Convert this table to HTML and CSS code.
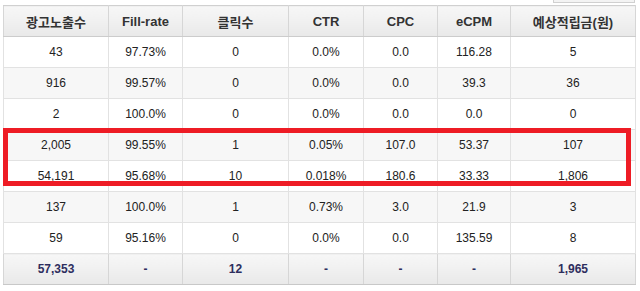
FILE: index.html
```html
<!DOCTYPE html>
<html lang="ko">
<head>
<meta charset="utf-8">
<link rel="stylesheet" href="styles.css">
</head>
<body>
<div class="page">
  <div class="topbar"><div class="topbox"></div></div>
  <div class="table-wrap">
    <table class="stats">
      <colgroup>
        <col style="width:105px"><col style="width:74px"><col style="width:106px"><col style="width:75px"><col style="width:74px"><col style="width:73px"><col>
      </colgroup>
      <thead>
        <tr><th>광고노출수</th><th>Fill-rate</th><th>클릭수</th><th>CTR</th><th>CPC</th><th>eCPM</th><th>예상적립금(원)</th></tr>
      </thead>
      <tbody>
        <tr><td>43</td><td>97.73%</td><td>0</td><td>0.0%</td><td>0.0</td><td>116.28</td><td>5</td></tr>
        <tr class="alt"><td>916</td><td>99.57%</td><td>0</td><td>0.0%</td><td>0.0</td><td>39.3</td><td>36</td></tr>
        <tr><td>2</td><td>100.0%</td><td>0</td><td>0.0%</td><td>0.0</td><td>0.0</td><td>0</td></tr>
        <tr class="alt"><td>2,005</td><td>99.55%</td><td>1</td><td>0.05%</td><td>107.0</td><td>53.37</td><td>107</td></tr>
        <tr><td>54,191</td><td>95.68%</td><td>10</td><td>0.018%</td><td>180.6</td><td>33.33</td><td>1,806</td></tr>
        <tr class="alt"><td>137</td><td>100.0%</td><td>1</td><td>0.73%</td><td>3.0</td><td>21.9</td><td>3</td></tr>
        <tr><td>59</td><td>95.16%</td><td>0</td><td>0.0%</td><td>0.0</td><td>135.59</td><td>8</td></tr>
      </tbody>
      <tfoot>
        <tr><td>57,353</td><td>-</td><td>12</td><td>-</td><td>-</td><td>-</td><td>1,965</td></tr>
      </tfoot>
    </table>
    <div class="highlight"></div>
  </div>
</div>
</body>
</html>
```
FILE: styles.css
```css
html, body {
  margin: 0;
  padding: 0;
  background: #ffffff;
}
.page {
  width: 640px;
  height: 291px;
  overflow: hidden;
  font-family: "Liberation Sans", "Noto Sans CJK KR", sans-serif;
  font-size: 12px;
  color: #222;
}
.topbar {
  height: 5px;
  display: flex;
  justify-content: flex-end;
  padding-right: 5px;
}
.topbox {
  width: 80px;
  height: 2px;
  background: #f3f3f3;
  border: 1px solid #d0d0d0;
  border-top: none;
}
.table-wrap {
  position: relative;
  margin-left: 3px;
  width: 633px;
}
.stats {
  width: 633px;
  border-collapse: collapse;
  table-layout: fixed;
}
.stats th, .stats td {
  height: 30px;
  padding: 0;
  text-align: center;
  border: 1px solid #e2e2e2;
  white-space: nowrap;
}
.stats thead th {
  background: linear-gradient(#f7f7f7, #e9e9e9);
  border-color: #d6d6d6;
  border-top: 1px solid #d0d0d0;
  border-bottom: 1px solid #cccccc;
  font-weight: bold;
  color: #333;
  font-size: 13px;
}
.stats tbody td {
  background: #ffffff;
  color: #222;
}
.stats tbody tr.alt td {
  background: #f7f7f7;
}
.stats tfoot td {
  background: linear-gradient(#f7f7f7, #e9e9e9);
  border-color: #d6d6d6;
  border-top: 1px solid #cccccc;
  border-bottom: 1px solid #c8c8c8;
  font-weight: bold;
  color: #2e2e5e;
}
.highlight {
  position: absolute;
  left: 0;
  top: 123px;
  width: 618px;
  height: 48px;
  border: 5px solid #ee1c25;
  pointer-events: none;
}
```
